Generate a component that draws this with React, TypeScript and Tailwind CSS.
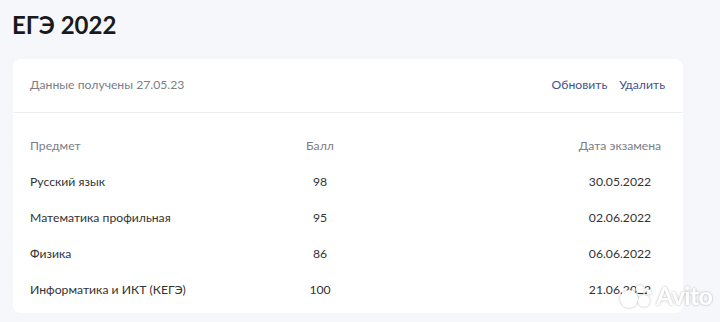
const ROWS = [
    { subject: 'Русский язык', score: '98', date: '30.05.2022' },
    { subject: 'Математика профильная', score: '95', date: '02.06.2022' },
    { subject: 'Физика', score: '86', date: '06.06.2022' },
    { subject: 'Информатика и ИКТ (КЕГЭ)', score: '100', date: '21.06.2022' }
];

function Watermark() {
    return (
        <div className="pointer-events-none absolute left-[618px] top-[280px] flex items-center gap-[2px] [filter:drop-shadow(0_0_1px_rgba(0,0,0,0.3))]">
            <svg width="36" height="30" viewBox="0 0 36 30">
                <circle cx="11" cy="19" r="9" fill="#fff" />
                <circle cx="26" cy="21" r="6" fill="#fff" />
                <circle cx="22" cy="9" r="4" fill="#fff" />
                <circle cx="31" cy="12" r="2.5" fill="#fff" />
            </svg>
            <span className="text-[25px] font-bold leading-none tracking-tight text-white">Avito</span>
        </div>
    );
}

export default function App() {
    return (
        <div className="relative h-[322px] w-[720px] overflow-hidden bg-[#f6f7fb] font-['Lato','Liberation_Sans',sans-serif]">
            <h1 className="pl-3 pt-[10px] text-[24px] font-bold leading-[30px] text-[#1a1a1a]">ЕГЭ 2022</h1>

            <div className="ml-[13px] mt-[19px] w-[670px] rounded-lg bg-white">
                {/* header */}
                <div className="flex h-[54px] items-center justify-between border-b border-[#eceef2] pl-[17px] pr-[18px] text-[12.2px]">
                    <span className="text-[#7a7e86]">Данные получены 27.05.23</span>
                    <div className="flex gap-3 text-[#44528f]">
                        <span>Обновить</span>
                        <span>Удалить</span>
                    </div>
                </div>

                {/* table */}
                <div className="pb-[5px] pl-[17px] pr-[18px] pt-[15px] text-[12.2px]">
                    <div className="flex h-9 items-center text-[#7a7e86]">
                        <span className="w-[260px]">Предмет</span>
                        <span className="w-[60px] text-center">Балл</span>
                        <span className="flex-1" />
                        <span className="w-[90px] text-center">Дата экзамена</span>
                    </div>
                    {ROWS.map((row) => (
                        <div key={row.subject} className="flex h-9 items-center text-[#333]">
                            <span className="w-[260px]">{row.subject}</span>
                            <span className="w-[60px] text-center">{row.score}</span>
                            <span className="flex-1" />
                            <span className="w-[90px] text-center">{row.date}</span>
                        </div>
                    ))}
                </div>
            </div>

            <Watermark />
        </div>
    );
}
